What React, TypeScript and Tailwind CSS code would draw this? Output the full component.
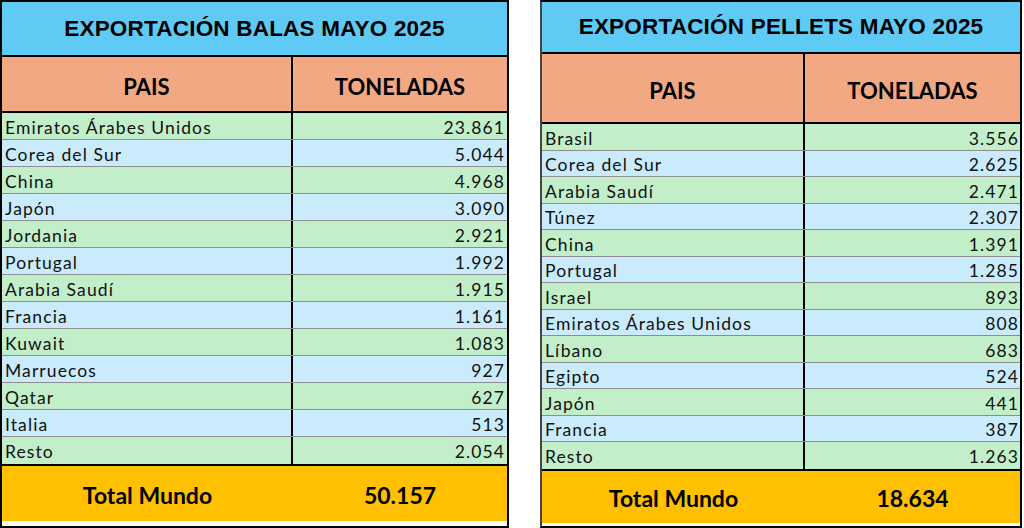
const balas: [string, string][] = [
  ["Emiratos Árabes Unidos", "23.861"],
  ["Corea del Sur", "5.044"],
  ["China", "4.968"],
  ["Japón", "3.090"],
  ["Jordania", "2.921"],
  ["Portugal", "1.992"],
  ["Arabia Saudí", "1.915"],
  ["Francia", "1.161"],
  ["Kuwait", "1.083"],
  ["Marruecos", "927"],
  ["Qatar", "627"],
  ["Italia", "513"],
  ["Resto", "2.054"],
];

const pellets: [string, string][] = [
  ["Brasil", "3.556"],
  ["Corea del Sur", "2.625"],
  ["Arabia Saudí", "2.471"],
  ["Túnez", "2.307"],
  ["China", "1.391"],
  ["Portugal", "1.285"],
  ["Israel", "893"],
  ["Emiratos Árabes Unidos", "808"],
  ["Líbano", "683"],
  ["Egipto", "524"],
  ["Japón", "441"],
  ["Francia", "387"],
  ["Resto", "1.263"],
];

const title = "font-['Liberation_Sans',Arial,sans-serif] font-bold text-[22.5px] tracking-[0.2px] text-black";
const cell = "font-['Lato','Noto_Sans',sans-serif] text-[17.5px] tracking-[1.1px] text-[#111]";
const bold = "font-['Lato','Noto_Sans',sans-serif] font-bold text-black";

function BalasTable() {
  return (
    <div className="w-[509px] border-2 border-black flex flex-col shrink-0">
      <div className={`h-[55px] bg-[#5fcaf3] border-b-2 border-black flex items-center justify-center ${title}`}>
        EXPORTACIÓN BALAS MAYO 2025
      </div>
      <div className={`h-[56px] bg-[#f2a983] border-b-2 border-black flex text-[22px] ${bold}`}>
        <div className="w-[291px] border-r-2 border-black flex items-center justify-center pt-[5px]">PAIS</div>
        <div className="flex-1 flex items-center justify-center pt-[5px]">TONELADAS</div>
      </div>
      <div className="flex flex-col">
        {balas.map(([pais, t], i) => (
          <div
            key={pais}
            className={`h-[27px] flex ${i % 2 === 0 ? "bg-[#c2efc9]" : "bg-[#caebfb]"} ${i < balas.length - 1 ? "border-b border-[#8e8e8e]" : ""}`}
          >
            <div className={`w-[291px] border-r-2 border-black flex items-center pl-[3px] pt-[4px] ${cell}`}>{pais}</div>
            <div className={`flex-1 flex items-center justify-end pr-[2px] pt-[4px] ${cell}`}>{t}</div>
          </div>
        ))}
      </div>
      <div className={`h-[57px] bg-[#ffc000] border-t-2 border-black flex text-[23px] ${bold}`}>
        <div className="w-[291px] flex items-center justify-center pt-[3px]">Total Mundo</div>
        <div className="flex-1 flex items-center justify-center pt-[3px]">50.157</div>
      </div>
    </div>
  );
}

function PelletsTable() {
  return (
    <div className="w-[482px] border-2 border-black border-l-[#444] flex flex-col shrink-0">
      <div className={`h-[52px] bg-[#5fcaf3] border-b-2 border-black flex items-center justify-center ${title}`}>
        EXPORTACIÓN PELLETS MAYO 2025
      </div>
      <div className={`h-[70px] bg-[#f2a983] border-b-2 border-black flex text-[22px] ${bold}`}>
        <div className="w-[263px] border-r-2 border-black flex items-center justify-center pt-[5px]">PAIS</div>
        <div className="flex-1 flex items-center justify-center pt-[5px]">TONELADAS</div>
      </div>
      <div className="flex flex-col">
        {pellets.map(([pais, t], i) => (
          <div
            key={pais}
            className={`h-[26.5px] flex ${i % 2 === 0 ? "bg-[#c2efc9]" : "bg-[#caebfb]"} ${i < pellets.length - 1 ? "border-b border-[#8e8e8e]" : ""}`}
          >
            <div className={`w-[263px] border-r-2 border-black flex items-center pl-[3px] pt-[4px] ${cell}`}>{pais}</div>
            <div className={`flex-1 flex items-center justify-end pr-[1px] pt-[4px] ${cell}`}>{t}</div>
          </div>
        ))}
      </div>
      <div className={`h-[54px] bg-[#ffc000] border-t-2 border-black flex text-[23px] ${bold}`}>
        <div className="w-[263px] flex items-center justify-center pt-[3px]">Total Mundo</div>
        <div className="flex-1 flex items-center justify-center pt-[3px]">18.634</div>
      </div>
    </div>
  );
}

export default function App() {
  return (
    <div className="w-[1024px] h-[528px] bg-white flex gap-[31px] overflow-hidden">
      <BalasTable />
      <PelletsTable />
    </div>
  );
}
